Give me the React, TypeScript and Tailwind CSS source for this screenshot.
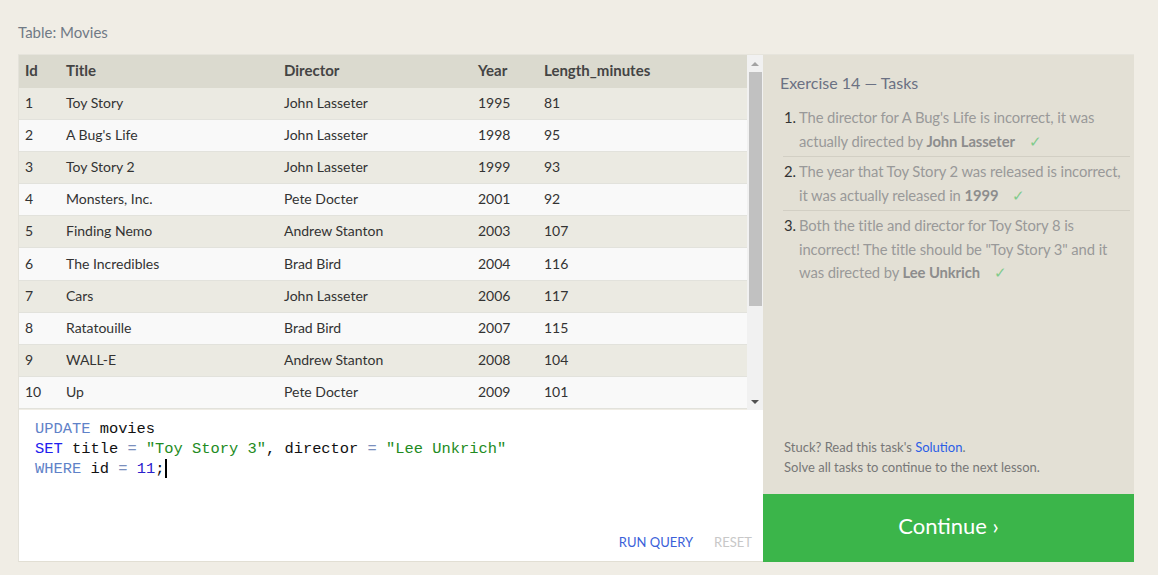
import React from "react";

// ─────────────────────────────────────────────────────────────────────────────
// Data
// ─────────────────────────────────────────────────────────────────────────────

interface Movie {
  id: number;
  title: string;
  director: string;
  year: number;
  length: number;
}

const MOVIES: Movie[] = [
  { id: 1, title: "Toy Story", director: "John Lasseter", year: 1995, length: 81 },
  { id: 2, title: "A Bug's Life", director: "John Lasseter", year: 1998, length: 95 },
  { id: 3, title: "Toy Story 2", director: "John Lasseter", year: 1999, length: 93 },
  { id: 4, title: "Monsters, Inc.", director: "Pete Docter", year: 2001, length: 92 },
  { id: 5, title: "Finding Nemo", director: "Andrew Stanton", year: 2003, length: 107 },
  { id: 6, title: "The Incredibles", director: "Brad Bird", year: 2004, length: 116 },
  { id: 7, title: "Cars", director: "John Lasseter", year: 2006, length: 117 },
  { id: 8, title: "Ratatouille", director: "Brad Bird", year: 2007, length: 115 },
  { id: 9, title: "WALL-E", director: "Andrew Stanton", year: 2008, length: 104 },
  { id: 10, title: "Up", director: "Pete Docter", year: 2009, length: 101 },
];

const FONT = "font-['Lato','Open_Sans',sans-serif]";

// ─────────────────────────────────────────────────────────────────────────────
// Pieces
// ─────────────────────────────────────────────────────────────────────────────

function Check(): JSX.Element {
  return <span className="ml-[14px] text-[#7fcb8c]">✓</span>;
}

function MoviesTable(): JSX.Element {
  return (
    <div className="flex h-[355px] overflow-hidden">
      <div className="flex-1">
        <div className="grid h-[33px] grid-cols-[47px_218px_194px_66px_1fr] items-center bg-[#dbdacf] pb-[2px] text-[15px] font-bold text-[#444]">
          <span className="pl-[6px]">Id</span>
          <span>Title</span>
          <span>Director</span>
          <span>Year</span>
          <span>Length_minutes</span>
        </div>
        {MOVIES.map((m, i) => (
          <div
            key={m.id}
            className={`grid h-[32.1px] grid-cols-[47px_218px_194px_66px_1fr] items-center border-b border-[#e2e2dc] pb-[2px] text-[14px] text-[#333] ${i % 2 === 0 ? "bg-[#ebeae2]" : "bg-[#f9f9f9]"}`}
          >
            <span className="pl-[6px]">{m.id}</span>
            <span>{m.title}</span>
            <span>{m.director}</span>
            <span>{m.year}</span>
            <span>{m.length}</span>
          </div>
        ))}
      </div>

      {/* fake scrollbar */}
      <div className="flex w-[16px] flex-col items-center bg-[#f1f1f1]">
        <div className="flex h-[17px] items-center justify-center">
          <div className="h-0 w-0 border-x-[4px] border-b-[4px] border-x-transparent border-b-[#a3a3a3]" />
        </div>
        <div className="h-[234px] w-[13px] bg-[#c1c1c1]" />
        <div className="flex-1" />
        <div className="flex h-[17px] items-center justify-center">
          <div className="h-0 w-0 border-x-[4px] border-t-[4px] border-x-transparent border-t-[#505050]" />
        </div>
      </div>
    </div>
  );
}

function Editor(): JSX.Element {
  return (
    <div className="flex flex-1 flex-col bg-white">
      <pre className="px-[16px] pt-[9px] font-['Liberation_Mono',monospace] text-[15.4px] leading-[20px] text-[#111]">
        <span className="text-[#5f82c8]">UPDATE</span> movies
        {"\n"}
        <span className="text-[#2020ee]">SET</span> title <span className="text-[#7b8fbd]">=</span>{" "}
        <span className="text-[#228b22]">"Toy Story 3"</span>, director{" "}
        <span className="text-[#7b8fbd]">=</span> <span className="text-[#228b22]">"Lee Unkrich"</span>
        {"\n"}
        <span className="text-[#5f82c8]">WHERE</span> id <span className="text-[#7b8fbd]">=</span>{" "}
        <span className="text-[#2a20cc]">11</span>;
        <span className="ml-[1px] inline-block h-[19px] w-[2px] bg-black align-top" />
      </pre>
      <div className="flex-1" />
      <div className="flex justify-end gap-[21px] pb-[9px] pr-[11px] text-[13px]">
        <span className="text-[#3b5fd9]">RUN QUERY</span>
        <span className="text-[#c8c8c8]">RESET</span>
      </div>
    </div>
  );
}

function TaskItem({
  n,
  children,
  last,
}: Readonly<{ n: number; children: React.ReactNode; last?: boolean }>): JSX.Element {
  return (
    <li className={`flex py-[3px] ${last ? "" : "border-b border-[#d2cfc4]"}`}>
      <span className="w-[13px] shrink-0 text-right text-[#333]">{n}.</span>
      <div className="ml-[3px] flex-1">{children}</div>
    </li>
  );
}

function TasksPanel(): JSX.Element {
  return (
    <div className="flex w-[371px] flex-col bg-[#e3e0d5]">
      <div className="flex-1 pl-[17px] pr-[4px] pt-[16px]">
        <h2 className="text-[16px] leading-[24px] text-[#6b7183]">Exercise 14 — Tasks</h2>
        <ol className="mt-[8px] pl-[3px] text-[14.8px] leading-[23.5px] tracking-[-0.1px] text-[#999]">
          <TaskItem n={1}>
            The director for A Bug's Life is incorrect, it was actually directed by{" "}
            <b className="text-[#8d8d8d]">John Lasseter</b>
            <Check />
          </TaskItem>
          <TaskItem n={2}>
            The year that Toy Story 2 was released is incorrect, it was actually released in{" "}
            <b className="text-[#8d8d8d]">1999</b>
            <Check />
          </TaskItem>
          <TaskItem n={3} last>
            Both the title and director for Toy Story 8 is incorrect! The title should be "Toy
            Story 3" and it was directed by <b className="text-[#8d8d8d]">Lee Unkrich</b>
            <Check />
          </TaskItem>
        </ol>
      </div>
      <div className="pb-[17px] pl-[21px] text-[13px] leading-[20px] text-[#777]">
        <p>
          Stuck? Read this task's <span className="text-[#2b5ee6]">Solution</span>.
        </p>
        <p>Solve all tasks to continue to the next lesson.</p>
      </div>
      <div className="flex h-[68px] items-center justify-center bg-[#3bb54a] pb-[5px] text-[22px] text-white">
        Continue ›
      </div>
    </div>
  );
}

// ─────────────────────────────────────────────────────────────────────────────
// Page
// ─────────────────────────────────────────────────────────────────────────────

export default function App(): JSX.Element {
  return (
    <div className={`h-[575px] w-[1158px] bg-[#f0ede5] pl-[18px] pt-[22px] ${FONT}`}>
      <p className="text-[15px] leading-[20px] text-[#707a85]">Table: Movies</p>
      <div className="mt-[12px] flex h-[508px] w-[1116px] border-t border-[#e6e4dc]">
        <div className="flex w-[745px] flex-col border-l border-[#e4e2da] border-b border-b-[#e2dfd4]">
          <MoviesTable />
          <Editor />
        </div>
        <TasksPanel />
      </div>
    </div>
  );
}
